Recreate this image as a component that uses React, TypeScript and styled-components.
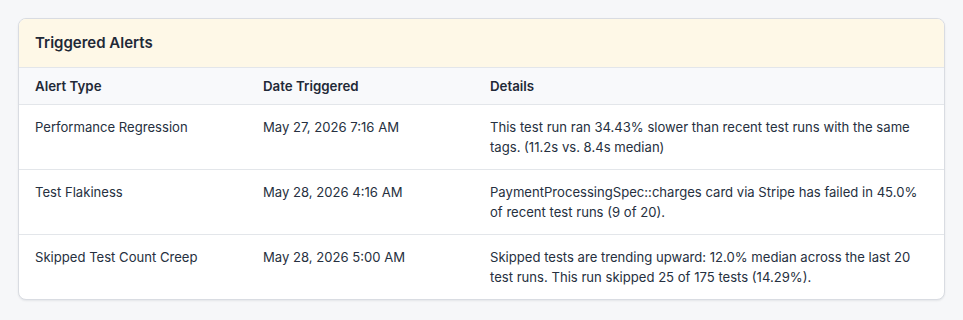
import React from 'react';
import styled, { createGlobalStyle } from 'styled-components';

type Alert = {
  type: string;
  date: string;
  details: string;
};

const alerts: Alert[] = [
  {
    type: 'Performance Regression',
    date: 'May 27, 2026 7:16 AM',
    details:
      'This test run ran 34.43% slower than recent test runs with the same tags. (11.2s vs. 8.4s median)',
  },
  {
    type: 'Test Flakiness',
    date: 'May 28, 2026 4:16 AM',
    details:
      'PaymentProcessingSpec::charges card via Stripe has failed in 45.0% of recent test runs (9 of 20).',
  },
  {
    type: 'Skipped Test Count Creep',
    date: 'May 28, 2026 5:00 AM',
    details:
      'Skipped tests are trending upward: 12.0% median across the last 20 test runs. This run skipped 25 of 175 tests (14.29%).',
  },
];

const App: React.FC = () => {
  return (
    <>
      <GlobalStyle />
      <Card>
        <CardHeader>Triggered Alerts</CardHeader>
        <Table>
          <HeadRow>
            <HeadCell>Alert Type</HeadCell>
            <HeadCell>Date Triggered</HeadCell>
            <HeadCell>Details</HeadCell>
          </HeadRow>
          {alerts.map((a, i) => (
            <Row key={a.type} last={i === alerts.length - 1}>
              <Cell>{a.type}</Cell>
              <Cell>{a.date}</Cell>
              <DetailsCell>{a.details}</DetailsCell>
            </Row>
          ))}
        </Table>
      </Card>
    </>
  );
};

export default App;

const GlobalStyle = createGlobalStyle`
  body {
    margin: 0;
    padding: 18px;
    background: #f6f7f9;
    font-family: Inter, "Noto Sans", sans-serif;
    color: #1f2937;
  }
`;

const Card = styled.div`
  background: #ffffff;
  border: 1px solid #d9dce2;
  border-radius: 8px;
  box-shadow: 0 1px 2px rgba(16, 24, 40, 0.08);
  overflow: hidden;
`;

const CardHeader = styled.div`
  background: #fef8e7;
  padding: 14px 16px;
  font-size: 15px;
  line-height: 20px;
  font-weight: 600;
  color: #1f2937;
  border-bottom: 1px solid #e3e6ea;
`;

const Table = styled.div`
  display: flex;
  flex-direction: column;
`;

const HeadRow = styled.div`
  display: grid;
  grid-template-columns: 228px 227px 1fr;
  background: #f8f9fb;
  border-bottom: 1px solid #e3e6ea;
`;

const HeadCell = styled.div`
  padding: 8px 16px;
  font-size: 13.3px;
  line-height: 20px;
  font-weight: 600;
  color: #1f2937;
`;

const Row = styled.div<{ last?: boolean }>`
  display: grid;
  grid-template-columns: 228px 227px 1fr;
  border-bottom: ${(props) => (props.last ? 'none' : '1px solid #e3e6ea')};
`;

const Cell = styled.div`
  padding: 12px 16px;
  font-size: 13.1px;
  line-height: 20px;
  color: #263040;
`;

const DetailsCell = styled(Cell)`
  padding-right: 24px;
`;
